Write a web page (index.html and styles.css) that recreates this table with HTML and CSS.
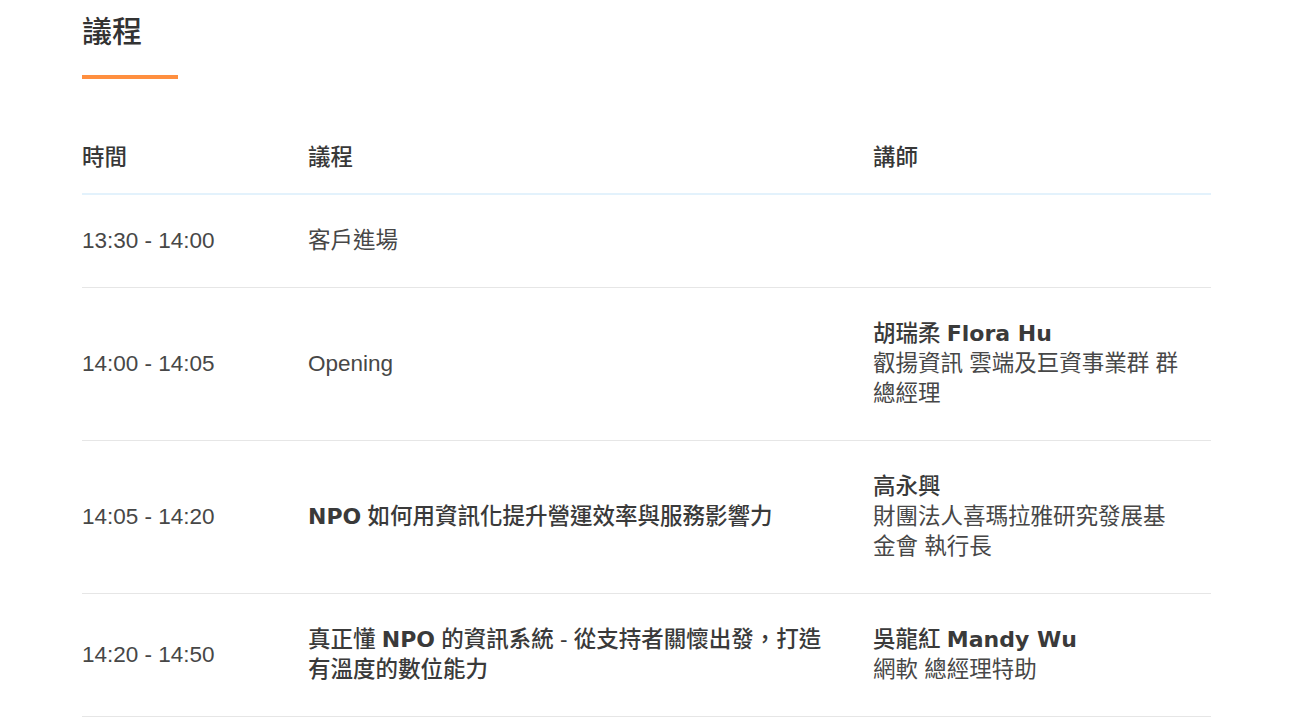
FILE: index.html
```html
<!DOCTYPE html>
<html lang="zh-Hant">
<head>
<meta charset="utf-8">
<title>議程</title>
<link rel="stylesheet" href="styles.css">
</head>
<body>
<section class="agenda">
  <h2 class="agenda-title">議程</h2>
  <div class="agenda-bar"></div>
  <table class="agenda-table">
    <colgroup>
      <col class="col-time">
      <col class="col-topic">
      <col class="col-speaker">
    </colgroup>
    <thead>
      <tr>
        <th>時間</th>
        <th>議程</th>
        <th>講師</th>
      </tr>
    </thead>
    <tbody>
      <tr>
        <td>13:30 - 14:00</td>
        <td class="topic">客戶進場</td>
        <td class="speaker"></td>
      </tr>
      <tr>
        <td>14:00 - 14:05</td>
        <td class="topic">Opening</td>
        <td class="speaker"><strong>胡瑞柔 <span class="latin">Flora Hu</span></strong><br>叡揚資訊 雲端及巨資事業群 群總經理</td>
      </tr>
      <tr>
        <td>14:05 - 14:20</td>
        <td class="topic"><strong><span class="latin">NPO</span> 如何用資訊化提升營運效率與服務影響力</strong></td>
        <td class="speaker"><strong>高永興</strong><br>財團法人喜瑪拉雅研究發展基金會 執行長</td>
      </tr>
      <tr>
        <td>14:20 - 14:50</td>
        <td class="topic"><strong>真正懂 <span class="latin">NPO</span> 的資訊系統 - 從支持者關懷出發，打造有溫度的數位能力</strong></td>
        <td class="speaker"><strong>吳龍紅 <span class="latin">Mandy Wu</span></strong><br>網軟 總經理特助</td>
      </tr>
    </tbody>
  </table>
</section>
</body>
</html>
```

FILE: styles.css
```css
html, body {
  margin: 0;
  padding: 0;
  background: #ffffff;
}

body {
  font-family: "Liberation Sans", Arial, "Noto Sans CJK TC", sans-serif;
  color: #474747;
}

.agenda {
  width: 1129px;
  padding-left: 82px;
}

.agenda-title {
  margin: 14px 0 0 0;
  font-size: 30px;
  line-height: 36px;
  font-weight: 500;
  color: #333333;
}

.agenda-bar {
  width: 96px;
  height: 4px;
  margin-top: 25px;
  background: #ff8f3f;
}

.agenda-table {
  width: 1129px;
  margin-top: 44px;
  border-collapse: collapse;
  table-layout: fixed;
  font-size: 22.5px;
  line-height: 30px;
}

.col-time { width: 226px; }
.col-topic { width: 565px; }
.col-speaker { width: 338px; }

.agenda-table th,
.agenda-table td {
  box-sizing: border-box;
}

.agenda-table th {
  text-align: left;
  font-weight: 500;
  color: #383838;
  padding: 20px 35px 20px 0;
  border-bottom: 2px solid #e3f2fc;
}

.agenda-table td {
  padding: 31px 35px 31px 0;
  vertical-align: middle;
  border-bottom: 1px solid #e6e6e6;
}

.agenda-table td.topic {
  padding-right: 40px;
}

.agenda-table td.speaker {
  padding-right: 28px;
}

.agenda-table strong {
  font-weight: 500;
  color: #3a3a3a;
}

.agenda-table .latin {
  font-family: "DejaVu Sans", sans-serif;
  font-weight: 700;
  font-size: 22px;
}
```
